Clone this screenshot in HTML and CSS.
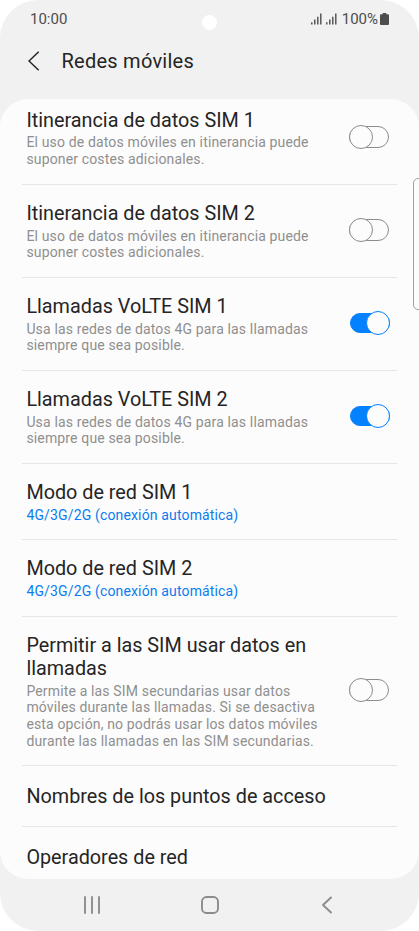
FILE: index.html
```html
<!DOCTYPE html>
<html lang="es">
<head>
    <meta charset="UTF-8">
    <meta name="viewport" content="width=device-width, initial-scale=1.0">
    <title>Redes móviles</title>
    <link rel="stylesheet" href="styles.css">
</head>
<body>
    <div class="phone">
        <div class="status-bar">
            <span class="time">10:00</span>
            <span class="camera"></span>
            <div class="status-icons">
                <svg class="signal" width="11" height="12" viewBox="0 0 11 12">
                    <path d="M0.8 9.3V11.5M3.8 6.6V11.5M6.8 3.7V11.5M9.8 0.5V11.5"/>
                </svg>
                <svg class="signal second" width="11" height="12" viewBox="0 0 11 12">
                    <path d="M0.8 9.3V11.5M3.8 6.6V11.5M6.8 3.7V11.5M9.8 0.5V11.5"/>
                </svg>
                <span class="percent">100%</span>
                <svg class="battery" width="9" height="12" viewBox="0 0 9 12">
                    <path d="M2.7 0H6.3V1.3H8Q9 1.3 9 2.3V11Q9 12 8 12H1Q0 12 0 11V2.3Q0 1.3 1 1.3H2.7Z"/>
                </svg>
            </div>
        </div>
        <header class="header">
            <svg class="back" width="12" height="20" viewBox="0 0 12 20">
                <path d="M10.7 0.7L1 10L10.7 19.3"/>
            </svg>
            <h1>Redes móviles</h1>
        </header>
        <main class="card">
            <ul class="settings">
                <li class="row">
                    <div class="text">
                        <h2>Itinerancia de datos SIM 1</h2>
                        <p>El uso de datos móviles en itinerancia puede<br>suponer costes adicionales.</p>
                    </div>
                    <span class="switch"></span>
                </li>
                <li class="row">
                    <div class="text">
                        <h2>Itinerancia de datos SIM 2</h2>
                        <p>El uso de datos móviles en itinerancia puede<br>suponer costes adicionales.</p>
                    </div>
                    <span class="switch"></span>
                </li>
                <li class="row">
                    <div class="text">
                        <h2>Llamadas VoLTE SIM 1</h2>
                        <p>Usa las redes de datos 4G para las llamadas<br>siempre que sea posible.</p>
                    </div>
                    <span class="switch on"></span>
                </li>
                <li class="row">
                    <div class="text">
                        <h2>Llamadas VoLTE SIM 2</h2>
                        <p>Usa las redes de datos 4G para las llamadas<br>siempre que sea posible.</p>
                    </div>
                    <span class="switch on"></span>
                </li>
                <li class="row">
                    <div class="text">
                        <h2>Modo de red SIM 1</h2>
                        <p class="value">4G/3G/2G (conexión automática)</p>
                    </div>
                </li>
                <li class="row">
                    <div class="text">
                        <h2>Modo de red SIM 2</h2>
                        <p class="value">4G/3G/2G (conexión automática)</p>
                    </div>
                </li>
                <li class="row">
                    <div class="text">
                        <h2>Permitir a las SIM usar datos en<br>llamadas</h2>
                        <p>Permite a las SIM secundarias usar datos<br>móviles durante las llamadas. Si se desactiva<br>esta opción, no podrás usar los datos móviles<br>durante las llamadas en las SIM secundarias.</p>
                    </div>
                    <span class="switch"></span>
                </li>
                <li class="row single">
                    <h2>Nombres de los puntos de acceso</h2>
                </li>
                <li class="row single">
                    <h2>Operadores de red</h2>
                </li>
            </ul>
        </main>
        <nav class="nav-bar">
            <svg width="18" height="18" viewBox="0 0 18 18">
                <path d="M2 1V17M9 1V17M16 1V17"/>
            </svg>
            <svg width="18" height="18" viewBox="0 0 18 18">
                <rect x="1" y="1" width="16" height="16" rx="4.5"/>
            </svg>
            <svg width="18" height="18" viewBox="0 0 18 18">
                <path d="M13 1.5L5 9L13 16.5"/>
            </svg>
        </nav>
        <span class="edge-panel"></span>
    </div>
</body>
</html>
```
FILE: styles.css
```css
* {
    box-sizing: border-box;
}
body {
    margin: 0;
    background-color: #fff;
    font-family: Roboto, "Liberation Sans", sans-serif;
    color: #252525;
}
h1, h2, p, ul {
    margin: 0;
    padding: 0;
    font-weight: 400;
}
svg {
    display: block;
    fill: none;
}
.phone {
    position: relative;
    display: flex;
    flex-direction: column;
    width: 419px;
    height: 931px;
    background-color: #f1f1f1;
    border-radius: 38px;
    overflow: hidden;
}
.status-bar {
    display: flex;
    justify-content: space-between;
    align-items: center;
    height: 37px;
    padding: 0 30px;
    font-size: 15px;
    color: #4d4d4d;
}
.camera {
    position: absolute;
    top: 15px;
    left: 202px;
    width: 15px;
    height: 15px;
    border-radius: 50%;
    background-color: #fff;
}
.status-icons {
    display: flex;
    align-items: center;
}
.signal {
    stroke: #4d4d4d;
    stroke-width: 1.4;
}
.second {
    margin-left: 4px;
}
.percent {
    margin: 0 2px 0 5px;
}
.battery {
    fill: #4d4d4d;
}
.header {
    display: flex;
    align-items: center;
    gap: 21.5px;
    height: 62px;
    padding: 0 28px 15px;
}
.back {
    stroke: #252525;
    stroke-width: 1.5;
}
.header h1 {
    font-size: 20px;
    line-height: 24px;
    letter-spacing: 0.25px;
}
.card {
    height: 779.5px;
    background-color: #fcfcfc;
    border-radius: 28px;
    overflow: hidden;
}
/* list is scrolled a little under the header */
.settings {
    margin: -7.5px 22px 0;
    list-style: none;
}
.row {
    display: flex;
    justify-content: space-between;
    align-items: center;
    padding: 18px 8px 15.9px 4.4px;
    border-bottom: 1px solid #e6e6e6;
}
.row h2 {
    font-size: 19.8px;
    line-height: 22.9px;
    white-space: nowrap;
}
.row p {
    margin-top: 2px;
    font-size: 14px;
    line-height: 16.65px;
    letter-spacing: 0.15px;
    color: #8f8f8f;
    white-space: nowrap;
}
.row .value {
    color: #0a7cf0;
}
.row.single {
    padding: 20px 4.4px 17px;
}
.switch {
    position: relative;
    flex: none;
    width: 40px;
    height: 22px;
    margin-bottom: 4px;
    border: 1px solid #8c8c8c;
    border-radius: 11px;
}
.switch::before {
    content: "";
    position: absolute;
    top: -2px;
    left: -1px;
    width: 24px;
    height: 24px;
    box-sizing: border-box;
    border: 1px solid #8c8c8c;
    border-radius: 50%;
    background-color: #fcfcfc;
}
.switch.on {
    height: 20px;
    margin-right: -1px;
    border-color: #0381fe;
    background-color: #0381fe;
}
.switch.on::before {
    top: -3px;
    left: 14.5px;
    border-color: #0381fe;
}
.nav-bar {
    display: flex;
    justify-content: space-between;
    align-items: center;
    height: 52px;
    padding: 0 83px;
}
.nav-bar svg {
    stroke: #8c8c8c;
    stroke-width: 1.9;
    stroke-linecap: round;
    stroke-linejoin: round;
}
.edge-panel {
    position: absolute;
    top: 178px;
    right: -5px;
    width: 11px;
    height: 132px;
    border: 1px solid #a0a0a0;
    border-radius: 5px;
}
```
